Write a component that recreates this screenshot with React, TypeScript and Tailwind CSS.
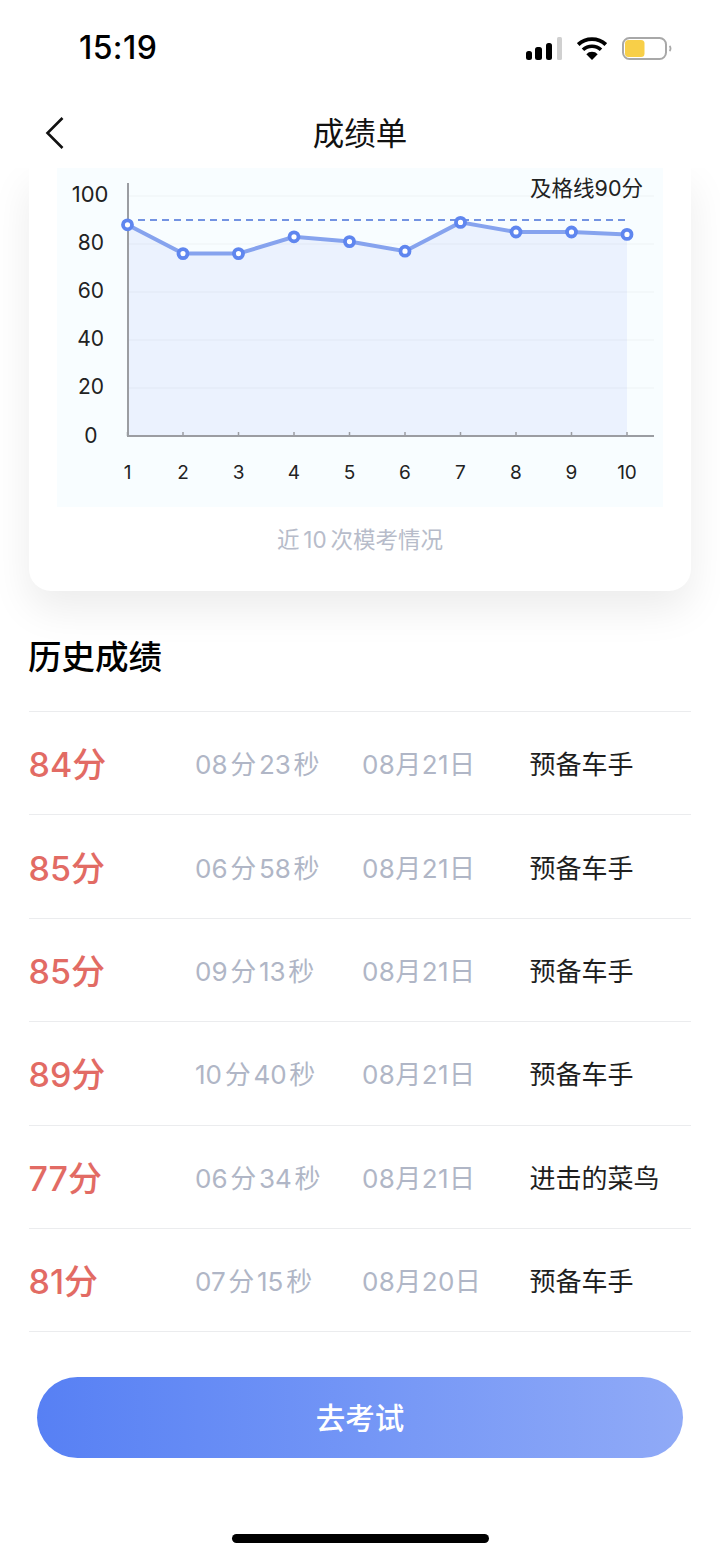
const FONT = "font-['Inter','Noto_Sans_CJK_SC',sans-serif]";

const rows = [
  ["84分", "08 分 23 秒", "08月21日", "预备车手"],
  ["85分", "06 分 58 秒", "08月21日", "预备车手"],
  ["85分", "09 分 13 秒", "08月21日", "预备车手"],
  ["89分", "10 分 40 秒", "08月21日", "预备车手"],
  ["77分", "06 分 34 秒", "08月21日", "进击的菜鸟"],
  ["81分", "07 分 15 秒", "08月20日", "预备车手"],
];

const values = [88, 76, 76, 83, 81, 77, 89, 85, 85, 84];
const X = (i: number) => 70.5 + i * 55.5;
const Y = (v: number) => 268 - v * 2.4;

function Chart() {
  const pts = values.map((v, i) => `${X(i)},${Y(v)}`).join(" ");
  return (
    <svg width="606" height="339" viewBox="0 0 606 339" className="block" fontFamily="Inter, 'Noto Sans CJK SC', sans-serif">
      <polygon points={`${X(0)},268 ${pts} ${X(9)},268`} fill="#ebf2fe" />
      {[100, 80, 60, 40, 20].map((v) => (
        <line key={v} x1="71" x2="597" y1={Y(v)} y2={Y(v)} stroke="#000" strokeOpacity="0.04" strokeWidth="1" />
      ))}
      <line x1="81" x2="571" y1="52" y2="52" stroke="#7393e2" strokeWidth="2" strokeDasharray="7 5" />
      <line x1="71" x2="71" y1="15" y2="269" stroke="#9b9da2" strokeWidth="2" />
      <line x1="70" x2="597" y1="268" y2="268" stroke="#9b9da2" strokeWidth="2" />
      {values.map((_, i) => (
        <line key={i} x1={X(i)} x2={X(i)} y1="264" y2="268" stroke="#9b9da2" strokeWidth="1.5" />
      ))}
      <polyline points={pts} fill="none" stroke="#86a3ee" strokeWidth="4" />
      {values.map((v, i) => (
        <circle key={i} cx={X(i)} cy={Y(v)} r="4.5" fill="#fff" stroke="#5f86ef" strokeWidth="3.8" />
      ))}
      {[100, 80, 60, 40, 20, 0].map((v, i) => (
        <text key={v} x={v === 100 ? 51.5 : v === 0 ? 40.5 : 47} y={Y(v) + (i === 0 ? 5.5 : i === 5 ? 7 : 6)} textAnchor="end" fontSize={v === 100 ? 22 : 21} fill="#222">
          {v}
        </text>
      ))}
      {values.map((_, i) => (
        <text key={i} x={X(i)} y="311" textAnchor="middle" fontSize="19" fill="#222">
          {i + 1}
        </text>
      ))}
      <text x="586" y="28" textAnchor="end" fontSize="21.5" fill="#222">及格线90分</text>
    </svg>
  );
}

export default function App() {
  return (
    <div className={`${FONT} relative w-[720px] h-[1558px] overflow-hidden bg-white flex flex-col`}>
      <header className="relative z-10 h-[168px] shrink-0 bg-white">
        <div className="flex items-center justify-between h-[96px] pl-[79px] pr-[48px]">
          <span className="text-[32px] font-medium tracking-[0.4px] text-black">15:19</span>
          <div className="flex items-center gap-[15px]">
            <svg width="36" height="23" viewBox="0 0 36 23">
              <rect x="0" y="14" width="6" height="9" rx="2.5" fill="#000" />
              <rect x="9" y="10" width="7" height="13" rx="2.5" fill="#000" />
              <rect x="20" y="6" width="6" height="17" rx="2.5" fill="#000" />
              <rect x="31" y="0" width="5" height="23" rx="1.5" fill="#d0d0d0" />
            </svg>
            <svg width="30" height="23" viewBox="0 0 30 23">
              <path d="M15 23 9.3 17.2a8 8 0 0 1 11.4 0z" fill="#000" />
              <path d="M6 12.8a13 13 0 0 1 18 0" fill="none" stroke="#000" strokeWidth="3.6" />
              <path d="M1.2 7.6a20 20 0 0 1 27.6 0" fill="none" stroke="#000" strokeWidth="3.8" />
            </svg>
            <svg width="50" height="23" viewBox="0 0 50 23">
              <rect x="1" y="1" width="43" height="21" rx="6.5" fill="#fff" stroke="#a8a8a8" strokeWidth="2" />
              <rect x="3" y="3" width="19.5" height="17" rx="3.5" fill="#f8cf48" />
              <path d="M47.5 9a3.5 3.5 0 0 1 0 5" fill="none" stroke="#a8a8a8" strokeWidth="1.8" />
            </svg>
          </div>
        </div>
        <div className="relative flex items-center justify-center h-[72px] pt-[4px]">
          <svg width="22" height="36" viewBox="0 0 22 36" className="absolute left-[44px] top-[19px]" fill="none">
            <path d="M18.5 3 3.5 18l15 15" stroke="#111" strokeWidth="2.6" />
          </svg>
          <span className="text-[31.5px] text-[#111]">成绩单</span>
        </div>
      </header>

      <section className="mx-[29px] h-[423px] shrink-0 rounded-b-[22px] bg-white shadow-[0_18px_40px_rgba(0,0,0,0.08)] flex flex-col">
        <div className="mx-[28px] h-[339px] bg-[#f8fdff]">
          <Chart />
        </div>
        <p className="mt-[16px] text-center text-[22.5px] leading-[34px] [word-spacing:-2.5px] text-[#b7bcca]">近 10 次模考情况</p>
      </section>

      <h2 className="mx-[28px] mt-[42px] text-[33.5px] leading-[48px] font-medium text-black">历史成绩</h2>

      <ul className="mx-[29px] mt-[30px] border-t border-[#ebecee]">
        {rows.map((r, i) => (
          <li key={i} className="grid grid-cols-[166px_167px_167.5px_1fr] items-center h-[103.4px] pt-[3px] border-b border-[#ebecee]">
            <span className="-ml-[0.5px] text-[34px] font-medium text-[#e26b64]">{r[0]}</span>
            <span className="text-[26px] [word-spacing:-4.6px] text-[#b0b6c6]">{r[1]}</span>
            <span className="text-[26px] tracking-[0.4px] text-[#b0b6c6]">{r[2]}</span>
            <span className="text-[26px] text-[#1f1f1f]">{r[3]}</span>
          </li>
        ))}
      </ul>

      <button className="mx-[37px] mt-[45px] h-[81px] rounded-full bg-gradient-to-r from-[#5780f4] to-[#90aaf7] text-[29.5px] font-medium text-white">
        去考试
      </button>

      <div className="absolute left-[232px] bottom-[15px] w-[257px] h-[9px] rounded-full bg-black" />
    </div>
  );
}
